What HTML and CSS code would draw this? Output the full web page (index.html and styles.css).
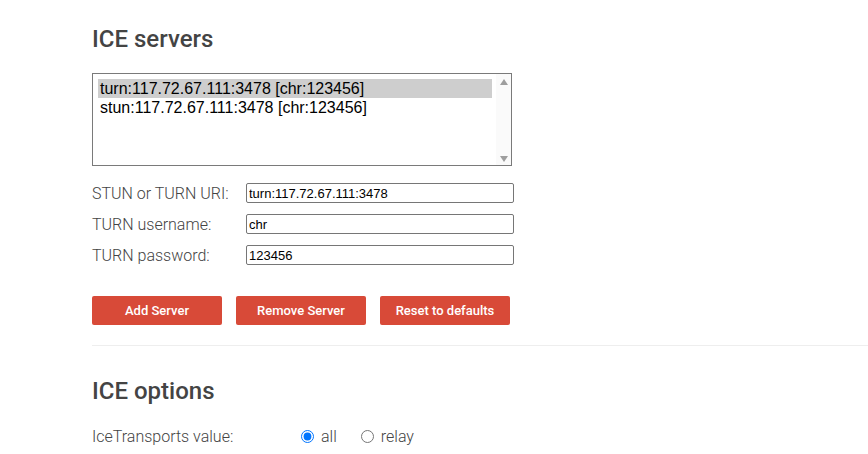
FILE: index.html
```html
<!DOCTYPE html>
<html>
<head>
<meta charset="utf-8">
<link rel="stylesheet" href="styles.css">
</head>
<body>
<main class="page">
  <section class="servers">
    <h2 class="title">ICE servers</h2>
    <div class="listbox">
      <div class="options">
        <div class="opt selected">turn:117.72.67.111:3478 [chr:123456]</div>
        <div class="opt">stun:117.72.67.111:3478 [chr:123456]</div>
      </div>
      <div class="scrollbar">
        <span class="arrow up"></span>
        <span class="arrow down"></span>
      </div>
    </div>
    <div class="fields">
      <div class="row"><label class="lbl">STUN or TURN URI:</label><input class="txt" type="text" value="turn:117.72.67.111:3478"></div>
      <div class="row"><label class="lbl">TURN username:</label><input class="txt" type="text" value="chr"></div>
      <div class="row"><label class="lbl">TURN password:</label><input class="txt" type="text" value="123456"></div>
    </div>
    <div class="buttons">
      <button class="btn">Add Server</button>
      <button class="btn">Remove Server</button>
      <button class="btn">Reset to defaults</button>
    </div>
  </section>
  <hr class="divider">
  <section class="options-sec">
    <h2 class="title">ICE options</h2>
    <div class="radio-row">
      <span class="rlabel">IceTransports value:</span>
      <label class="choice"><input type="radio" name="t" checked><span>all</span></label>
      <label class="choice"><input type="radio" name="t"><span>relay</span></label>
    </div>
  </section>
</main>
</body>
</html>
```

FILE: styles.css
```css
html, body {
  margin: 0;
  padding: 0;
  background: #fff;
}
body {
  font-family: Roboto, "Noto Sans", sans-serif;
  color: #444;
  overflow: hidden;
}
.page {
  padding: 25px 0 0 92px;
  display: flex;
  flex-direction: column;
}
.title {
  margin: 0;
  font-size: 24px;
  line-height: 28px;
  font-weight: 500;
  color: #444;
}
.listbox {
  margin-top: 20px;
  width: 420px;
  height: 93px;
  box-sizing: border-box;
  border: 1px solid #7a7a7a;
  display: flex;
  font-family: "Liberation Sans", Arial, sans-serif;
  font-size: 16px;
  color: #000;
}
.options {
  flex: 1;
  padding: 5px 4px 0 5px;
}
.opt {
  height: 19px;
  line-height: 19px;
  padding-left: 2px;
  white-space: nowrap;
}
.opt.selected {
  background: #cecece;
}
.scrollbar {
  width: 15px;
  background: #fafafa;
  display: flex;
  flex-direction: column;
  justify-content: space-between;
  align-items: center;
  padding: 5px 0 3px;
}
.arrow {
  width: 0;
  height: 0;
  border-left: 4.5px solid transparent;
  border-right: 4.5px solid transparent;
}
.arrow.up { border-bottom: 6px solid #9e9e9e; }
.arrow.down { border-top: 6px solid #9e9e9e; }
.fields {
  margin-top: 17px;
  display: flex;
  flex-direction: column;
  gap: 11px;
}
.row {
  display: flex;
  align-items: center;
  height: 20px;
}
.lbl {
  width: 154px;
  font-size: 16px;
  font-weight: 300;
  color: #444;
}
.txt {
  width: 268px;
  height: 20px;
  box-sizing: border-box;
  margin: 0;
  border: 1px solid #767676;
  border-radius: 2px;
  padding: 0 2px;
  font-family: "Liberation Sans", Arial, sans-serif;
  font-size: 13px;
  color: #000;
}
.buttons {
  margin-top: 31px;
  display: flex;
  gap: 14px;
}
.btn {
  width: 130px;
  height: 29px;
  border: none;
  border-radius: 2px;
  background: #d84a38;
  color: #fff;
  font-family: Roboto, sans-serif;
  font-weight: 500;
  font-size: 13px;
  padding: 0;
}
.divider {
  margin: 20px 0 0 0;
  border: none;
  border-top: 1px solid #eee;
  height: 0;
}
.options-sec {
  margin-top: 31px;
}
.radio-row {
  margin-top: 22px;
  display: flex;
  align-items: center;
  font-size: 16px;
  font-weight: 300;
  color: #444;
}
.rlabel {
  width: 206px;
}
.choice {
  display: flex;
  align-items: center;
  margin-right: 21px;
}
.choice input {
  margin: 0 7px 0 3px;
  width: 13px;
  height: 13px;
}
```
